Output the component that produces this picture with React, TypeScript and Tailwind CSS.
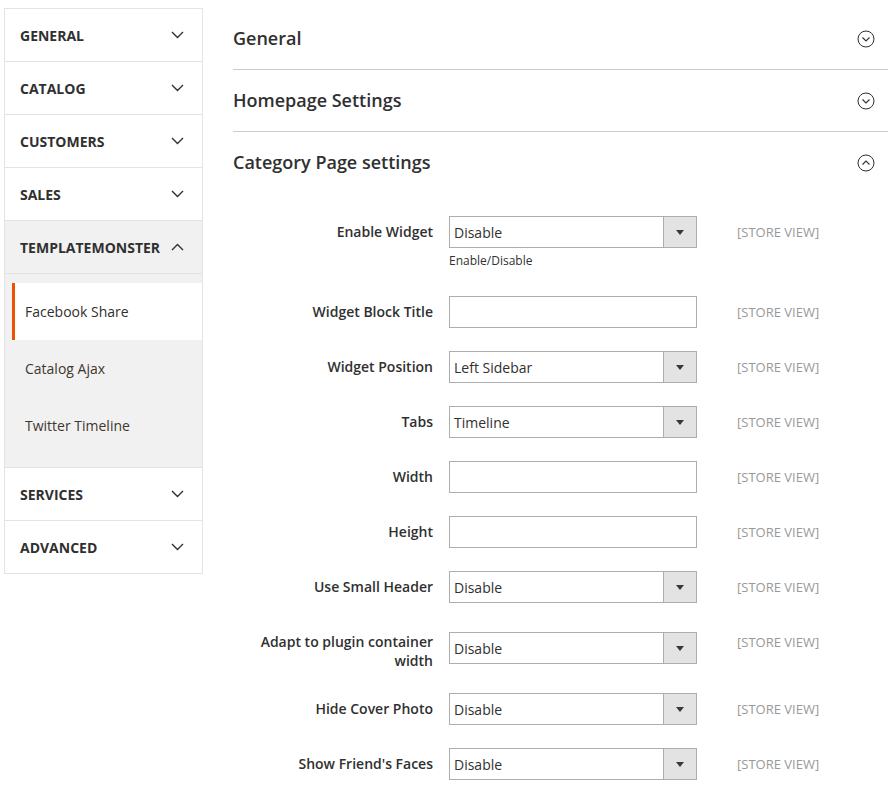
import type { ReactNode } from 'react';

const NAV_TOP = ['General', 'Catalog', 'Customers', 'Sales'];
const NAV_BOTTOM = ['Services', 'Advanced'];
const SUB_ITEMS = ['Facebook Share', 'Catalog Ajax', 'Twitter Timeline'];

type Field = {
  label: ReactNode;
  kind: 'select' | 'text';
  value?: string;
  note?: string;
  twoLine?: boolean;
};

const FIELDS: Field[] = [
  { label: 'Enable Widget', kind: 'select', value: 'Disable', note: 'Enable/Disable' },
  { label: 'Widget Block Title', kind: 'text' },
  { label: 'Widget Position', kind: 'select', value: 'Left Sidebar' },
  { label: 'Tabs', kind: 'select', value: 'Timeline' },
  { label: 'Width', kind: 'text' },
  { label: 'Height', kind: 'text' },
  { label: 'Use Small Header', kind: 'select', value: 'Disable' },
  {
    label: (
      <>
        Adapt to plugin container
        <br />
        width
      </>
    ),
    kind: 'select',
    value: 'Disable',
    twoLine: true,
  },
  { label: 'Hide Cover Photo', kind: 'select', value: 'Disable' },
  { label: "Show Friend's Faces", kind: 'select', value: 'Disable' },
];

function Chevron({ up = false }: { up?: boolean }) {
  return (
    <svg width="13" height="8" viewBox="0 0 13 8" className="shrink-0">
      <polyline
        points={up ? '1,7 6.5,1.5 12,7' : '1,1 6.5,6.5 12,1'}
        fill="none"
        stroke="#303030"
        strokeWidth="1.4"
      />
    </svg>
  );
}

function CircleToggle({ open = false }: { open?: boolean }) {
  return (
    <svg width="18" height="18" viewBox="0 0 18 18">
      <circle cx="9" cy="9" r="8" fill="none" stroke="#303030" strokeWidth="1" />
      <polyline
        points={open ? '5.5,10.5 9,7 12.5,10.5' : '5.5,7.5 9,11 12.5,7.5'}
        fill="none"
        stroke="#303030"
        strokeWidth="1.1"
      />
    </svg>
  );
}

function NavItem({ title }: { title: string }) {
  return (
    <div className="flex h-[53px] items-center justify-between border-b border-[#e3e3e3] pl-[15px] pr-[18px]">
      <span className="text-[14px] font-bold uppercase text-[#303030]">{title}</span>
      <Chevron />
    </div>
  );
}

function Sidebar() {
  return (
    <aside className="ml-[4px] mt-[8px] w-[199px] shrink-0 self-start border-x border-t border-[#e3e3e3]">
      {NAV_TOP.map((t) => (
        <NavItem key={t} title={t} />
      ))}
      <div className="flex h-[53px] items-center justify-between border-b border-[#e3e3e3] bg-[#f1f1f1] pl-[15px] pr-[18px]">
        <span className="text-[14px] font-bold uppercase text-[#303030]">Templatemonster</span>
        <Chevron up />
      </div>
      <div className="border-b border-[#e3e3e3] bg-[#f1f1f1] pb-[13px] pt-[9px]">
        {SUB_ITEMS.map((s, i) => (
          <div
            key={s}
            className={
              i === 0
                ? 'ml-[7px] flex h-[57px] items-center border-l-[3px] border-[#eb5202] bg-white pl-[10px] text-[14px] text-[#303030]'
                : 'ml-[7px] flex h-[57px] items-center pl-[13px] text-[14px] text-[#41362f]'
            }
          >
            {s}
          </div>
        ))}
      </div>
      {NAV_BOTTOM.map((t) => (
        <NavItem key={t} title={t} />
      ))}
    </aside>
  );
}

function SectionHeader({ title, open = false, border = true }: { title: string; open?: boolean; border?: boolean }) {
  return (
    <div
      className={
        border
          ? 'flex h-[62px] items-center justify-between border-b border-[#cccccc] pr-[13px]'
          : 'flex h-[61px] items-center justify-between pr-[13px]'
      }
    >
      <span className="text-[18px] font-semibold text-[#303030]">{title}</span>
      <CircleToggle open={open} />
    </div>
  );
}

function Control({ field }: { field: Field }) {
  if (field.kind === 'text') {
    return <div className="h-[32px] w-[248px] border border-[#adadad] bg-white" />;
  }
  return (
    <div className="flex h-[32px] w-[248px] border border-[#adadad] bg-white">
      <span className="flex flex-1 items-center pl-[4px] text-[14px] text-[#303030]">{field.value}</span>
      <span className="flex w-[33px] items-center justify-center border-l border-[#adadad] bg-[#e3e3e3]">
        <svg width="8" height="5" viewBox="0 0 8 5">
          <polygon points="0,0 8,0 4,5" fill="#41362f" />
        </svg>
      </span>
    </div>
  );
}

function FieldRow({ field }: { field: Field }) {
  return (
    <div className={field.note ? 'mb-[26px] flex items-start' : 'mb-[23px] flex items-start'}>
      <label className="w-[200px] shrink-0 pt-[6px] text-right text-[14px] font-semibold leading-[19px] text-[#303030]">
        {field.label}
      </label>
      <div className={field.twoLine ? 'ml-[16px] mt-[6px]' : 'ml-[16px]'}>
        <Control field={field} />
        {field.note && <p className="mt-[4px] text-[12px] leading-[18px] text-[#303030]">{field.note}</p>}
      </div>
      <span className="ml-[40px] pt-[8px] text-[13px] leading-[17px] text-[#999999]">[STORE VIEW]</span>
    </div>
  );
}

export default function App() {
  return (
    <div className="flex min-h-[797px] bg-white" style={{ fontFamily: '"Open Sans", "Liberation Sans", sans-serif' }}>
      <Sidebar />
      <main className="ml-[30px] mt-[8px] w-[655px]">
        <SectionHeader title="General" />
        <SectionHeader title="Homepage Settings" />
        <SectionHeader title="Category Page settings" open border={false} />
        <div className="pt-[23px]">
          {FIELDS.map((f, i) => (
            <FieldRow key={i} field={f} />
          ))}
        </div>
      </main>
    </div>
  );
}
